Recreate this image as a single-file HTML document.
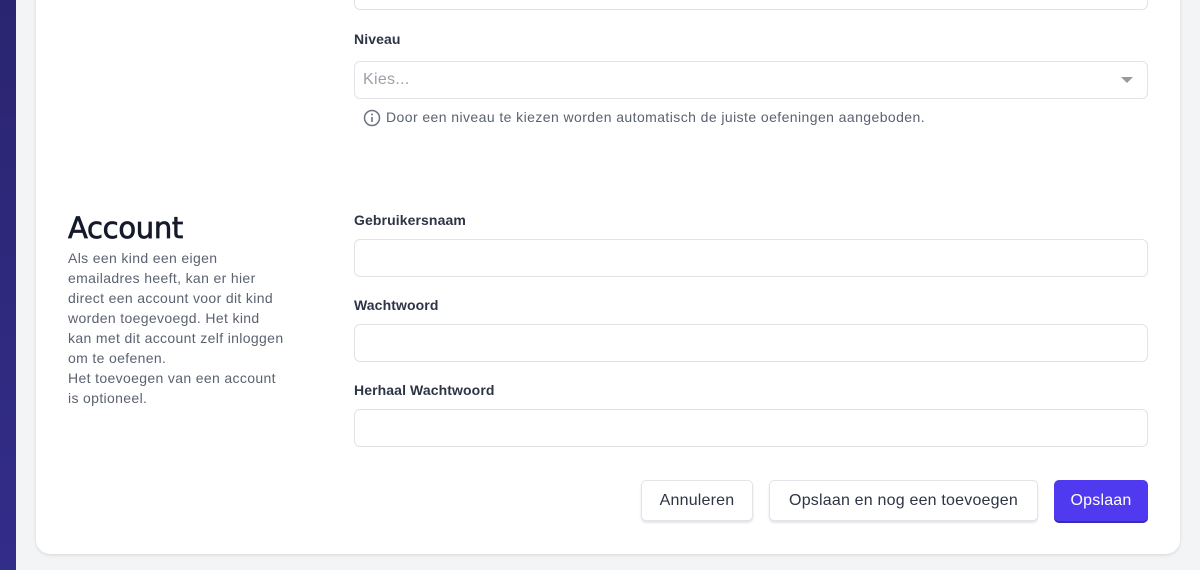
<!DOCTYPE html>
<html><head><style>
*{box-sizing:border-box;margin:0;padding:0}
body{width:1200px;height:570px;overflow:hidden;background:#f3f4f6;font-family:"Liberation Sans",sans-serif;position:relative}
.sb{position:absolute;left:0;top:0;width:16px;height:570px;background:linear-gradient(#2a2570,#332d8a)}
.card{position:absolute;left:36px;top:-20px;width:1144px;height:574px;background:#fff;border-radius:14px;box-shadow:0 1px 3px rgba(0,0,0,.12)}
.in{position:absolute;left:354px;width:794px;height:38px;border:1px solid #e2e3e6;border-radius:6px;background:#fff}
.lbl{position:absolute;left:354px;font-size:14px;font-weight:bold;color:#2d3445;letter-spacing:0.1px}
.btn{position:absolute;top:480px;height:41px;border-radius:5px;font-size:16px;display:flex;align-items:center;justify-content:center;color:#2d3445;background:#fff;border:1px solid #e3e4e8;box-shadow:0 2px 2px #e3e4e8;letter-spacing:0.2px}
</style></head><body>
<div class="sb"></div>
<div class="card"></div>
<div class="in" style="top:-28px"></div>
<div class="lbl" style="top:31px">Niveau</div>
<div class="in" style="top:61px"><span style="position:absolute;left:8px;top:9px;font-size:16px;color:#9ca0a8;letter-spacing:0.3px">Kies...</span><span style="position:absolute;right:14px;top:15px;width:0;height:0;border-left:6px solid transparent;border-right:6px solid transparent;border-top:6px solid #999"></span></div>
<svg style="position:absolute;left:363px;top:109px" width="18" height="18" viewBox="0 0 18 18"><circle cx="9" cy="9" r="7.5" fill="none" stroke="#6b7280" stroke-width="1.5"/><circle cx="9" cy="5.5" r="1" fill="#6b7280"/><path d="M9 8v5" stroke="#6b7280" stroke-width="1.6"/></svg>
<div style="position:absolute;left:386px;top:109px;font-size:14px;color:#5b6270;letter-spacing:0.42px">Door een niveau te kiezen worden automatisch de juiste oefeningen aangeboden.</div>
<div style="position:absolute;left:68px;top:211px;font-size:29px;color:#141a2b;font-family:'DejaVu Sans',sans-serif;letter-spacing:-0.3px;-webkit-text-stroke:0.7px #141a2b">Account</div>
<div style="position:absolute;left:68px;top:248px;width:260px;white-space:nowrap;font-size:14px;line-height:20px;color:#5b6270;letter-spacing:0.35px">Als een kind een eigen<br>emailadres heeft, kan er hier<br>direct een account voor dit kind<br>worden toegevoegd. Het kind<br>kan met dit account zelf inloggen<br>om te oefenen.<br>Het toevoegen van een account<br>is optioneel.</div>
<div class="lbl" style="top:212px">Gebruikersnaam</div>
<div class="in" style="top:239px"></div>
<div class="lbl" style="top:297px">Wachtwoord</div>
<div class="in" style="top:324px"></div>
<div class="lbl" style="top:382px">Herhaal Wachtwoord</div>
<div class="in" style="top:409px"></div>
<div class="btn" style="left:641px;width:112px">Annuleren</div>
<div class="btn" style="left:769px;width:269px">Opslaan en nog een toevoegen</div>
<div class="btn" style="left:1054px;width:94px;background:#4f3af0;border-color:#4f3af0;color:#fff;box-shadow:0 2px 0 #3a2bb5">Opslaan</div>
</body></html>
